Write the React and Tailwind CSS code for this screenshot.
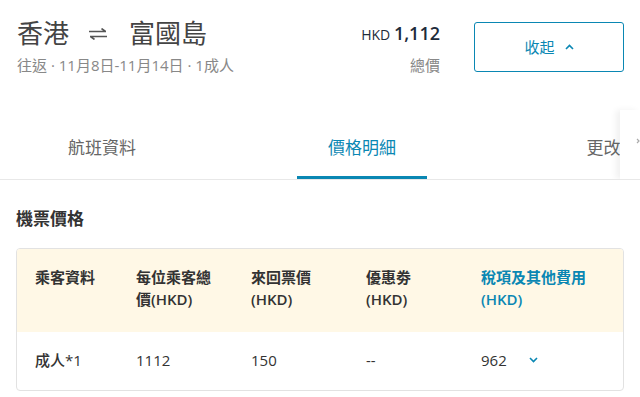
import React from 'react';

const cols = [
  { head: ['乘客資料'], val: '成人*1' },
  { head: ['每位乘客總', '價(HKD)'], val: '1112' },
  { head: ['來回票價', '(HKD)'], val: '150' },
  { head: ['優惠劵', '(HKD)'], val: '--' },
  { head: ['稅項及其他費用', '(HKD)'], val: '962', link: true },
];

const SwapIcon = () => (
  <svg width="20" height="12" viewBox="0 0 20 12" fill="none" stroke="#555" strokeWidth="1.6">
    <path d="M1 3.5h17M13.5 0.5l4 3" />
    <path d="M19 8.5H2M6.5 11.5l-4-3" />
  </svg>
);

export default function App() {
  return (
    <div
      className="w-[640px] h-[397px] overflow-hidden bg-white text-[#333]"
      style={{ fontFamily: '"Open Sans", "Noto Sans CJK TC", sans-serif' }}
    >
      {/* HEADER */}
      <div className="flex items-start pl-[17px] pr-[16px] pt-[15px] h-[100px]">
        <div className="flex-1">
          <div className="flex items-center text-[26px] leading-[36px] text-[#444]">
            <span>香港</span>
            <span className="ml-[19px] mr-[21px] mt-[2px]"><SwapIcon /></span>
            <span>富國島</span>
          </div>
          <div className="mt-[4px] text-[15px] leading-[20px] text-[#888]">
            往返 · 11月8日-11月14日 · 1成人
          </div>
        </div>
        <div className="w-[200px] text-right pt-[6px]">
          <div className="text-[#1d2b3a] leading-[24px]">
            <span className="text-[14px] font-medium">HKD </span>
            <span className="text-[18px] font-semibold">1,112</span>
          </div>
          <div className="mt-[8px] text-[15px] leading-[20px] text-[#888]">總價</div>
        </div>
        <button className="shrink-0 ml-[34px] mt-[7px] w-[150px] h-[50px] border border-[#0a87b3] rounded-[3px] text-[#0a87b3] text-[15px] flex items-center justify-center gap-[10px]">
          收起
          <svg width="9" height="6" viewBox="0 0 9 6" fill="none" stroke="#0a87b3" strokeWidth="1.6">
            <path d="M1 5l3.5-3.5L8 5" />
          </svg>
        </button>
      </div>

      {/* TABS */}
      <div className="relative h-[80px] border-b border-[#e8e8e8] overflow-hidden">
        <div className="flex items-end h-full pl-[37px] text-[17px] whitespace-nowrap">
          <div className="shrink-0 w-[130px] h-[56px] flex justify-center pt-[12px] text-[#666]">航班資料</div>
          <div className="shrink-0 ml-[130px] w-[130px] h-[56px] flex justify-center pt-[12px] text-[#0a87b3] border-b-[3px] border-[#0a87b3]">價格明細</div>
          <div className="shrink-0 ml-[127px] w-[150px] h-[56px] flex justify-center pt-[12px] text-[#666]">更改及退票</div>
        </div>
        <div className="absolute right-0 top-[10px] bottom-0 w-[20px] bg-white shadow-[-4px_0_6px_rgba(0,0,0,0.06)] flex items-center justify-end">
          <svg className="-mt-[8px]" width="4" height="6" viewBox="0 0 4 6" fill="none" stroke="#aaa" strokeWidth="1.2">
            <path d="M1 1l2 2-2 2" />
          </svg>
        </div>
      </div>

      {/* PRICE TABLE */}
      <div className="px-[16px] pt-[28px]">
        <div className="text-[17px] font-bold leading-[22px] text-[#333]">機票價格</div>
        <div className="mt-[18px] border border-[#e2e2e2] rounded-[4px] overflow-hidden">
          <div className="flex bg-[#fff8e6] h-[83px] pl-[18px] pt-[17px]">
            {cols.map((c, i) => (
              <div
                key={i}
                className={`${i === 0 ? 'w-[101px]' : 'w-[115px]'} text-[15px] font-semibold leading-[22px] ${c.link ? 'text-[#0a87b3]' : 'text-[#333]'}`}
              >
                {c.head.map((h, j) => (
                  <div key={j}>{h}</div>
                ))}
              </div>
            ))}
          </div>
          <div className="flex items-center h-[58px] pl-[18px]">
            {cols.map((c, i) => (
              <div
                key={i}
                className={`${i === 0 ? 'w-[101px]' : 'w-[115px]'} text-[15px] font-medium text-[#333] flex items-center -mt-[1px]`}
              >
                {c.val}
                {c.link && (
                  <svg className="ml-[22px] -mt-[2px]" width="9" height="6" viewBox="0 0 9 6" fill="none" stroke="#0a87b3" strokeWidth="1.6">
                    <path d="M1 1l3.5 3.5L8 1" />
                  </svg>
                )}
              </div>
            ))}
          </div>
        </div>
      </div>
    </div>
  );
}
